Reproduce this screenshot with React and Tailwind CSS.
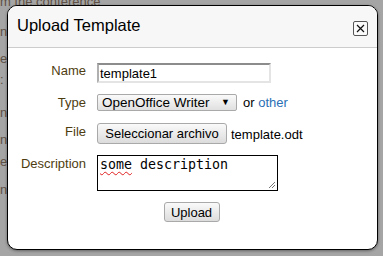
import React from "react";

const font = { fontFamily: '"Liberation Sans", Arial, sans-serif' };

export default function App() {
  return (
    <div
      className="relative w-[383px] h-[256px] overflow-hidden bg-[#a5a5a5] text-[#5e5044] text-[13px] leading-[15px]"
      style={font}
    >
      {/* page behind the overlay */}
      <div className="flex flex-col">
        <div className="-mt-[6px]">m the conference</div>
        <div className="mt-[15px]">na</div>
        <div className="mt-[12px]">e</div>
        <div className="mt-[6px]">:</div>
        <div className="mt-[18px]">n</div>
        <div className="mt-[12px]">na</div>
        <div className="mt-[7px]">e</div>
        <div className="mt-[13px]">n</div>
      </div>

      {/* dialog */}
      <div className="absolute left-[7px] top-[5px] w-[371px] h-[245px] rounded-[10px] border border-black bg-white overflow-hidden text-black shadow-[0_1px_3px_rgba(0,0,0,0.4)]">
        <div className="h-[42px] bg-[#f7f7f7] border-b border-[#cccccc] flex justify-between pl-[9px] pr-[9px]">
          <div className="pt-[9px] text-[16.5px] leading-[20px] text-black">Upload Template</div>
          <div className="mt-[15px] w-[15px] h-[15px] border border-[#555] rounded-[2px] flex items-center justify-center bg-white/40">
            <svg width="9" height="9" viewBox="0 0 9 9">
              <path d="M1 1 L8 8 M8 1 L1 8" stroke="#111" strokeWidth="1.2" />
            </svg>
          </div>
        </div>

        <div className="pt-[15px] pl-[11px] flex flex-col">
          {/* Name */}
          <div className="flex items-start">
            <div className="w-[67px] text-right text-[#4e3d10]">Name</div>
            <div className="ml-[11px] w-[174px] h-[20px] border-2 border-t-[#8c8c8c] border-l-[#b0b0b0] border-r-[#e4e4e4] border-b-[#e4e4e4] flex items-center pl-[1px] text-[13px]">
              template1
            </div>
          </div>

          {/* Type */}
          <div className="flex items-start mt-[11px]">
            <div className="w-[67px] text-right text-[#4e3d10] pt-[1px]">Type</div>
            <div className="ml-[11px] w-[140px] h-[17px] border border-[#a9a9a9] rounded-[2px] bg-gradient-to-b from-[#fafafa] to-[#e0e0e0] flex items-center justify-between pl-[4px] pr-[6px]">
              <span className="leading-[15px] text-[13.5px]">OpenOffice Writer</span>
              <span className="text-[9px] leading-[9px]">▼</span>
            </div>
            <div className="ml-[6px] pt-[1px]">
              or <span className="text-[#2a6fb5]">other</span>
            </div>
          </div>

          {/* File */}
          <div className="flex items-start mt-[12px]">
            <div className="w-[67px] text-right text-[#4e3d10] pt-[1px]">File</div>
            <div className="ml-[11px] w-[130px] h-[21px] border border-[#a9a9a9] rounded-[3px] bg-gradient-to-b from-[#fafafa] to-[#dcdcdc] flex items-center justify-center">
              Seleccionar archivo
            </div>
            <div className="ml-[4px] pt-[4px]">template.odt</div>
          </div>

          {/* Description */}
          <div className="flex items-start mt-[11px]">
            <div className="w-[67px] text-right text-[#4e3d10] pt-[1px]">Description</div>
            <div
              className="relative ml-[11px] w-[181px] h-[36px] border border-black pl-[2px] pt-[1px] text-[13.3px] leading-[16px]"
              style={{ fontFamily: '"DejaVu Sans Mono", monospace' }}
            >
              <span className="underline decoration-wavy decoration-[#e02020] decoration-1 underline-offset-2">some</span> description
              <svg className="absolute right-[1px] bottom-[1px]" width="8" height="8" viewBox="0 0 8 8">
                <path d="M7 1 L1 7 M7 4 L4 7" stroke="#777" strokeWidth="1" />
              </svg>
            </div>
          </div>
        </div>

        <div className="flex justify-center mt-[11px] pr-[2px]">
          <div className="w-[56px] h-[20px] border border-[#a9a9a9] rounded-[3px] bg-gradient-to-b from-[#fafafa] to-[#dcdcdc] flex items-center justify-center">
            Upload
          </div>
        </div>
      </div>
    </div>
  );
}
